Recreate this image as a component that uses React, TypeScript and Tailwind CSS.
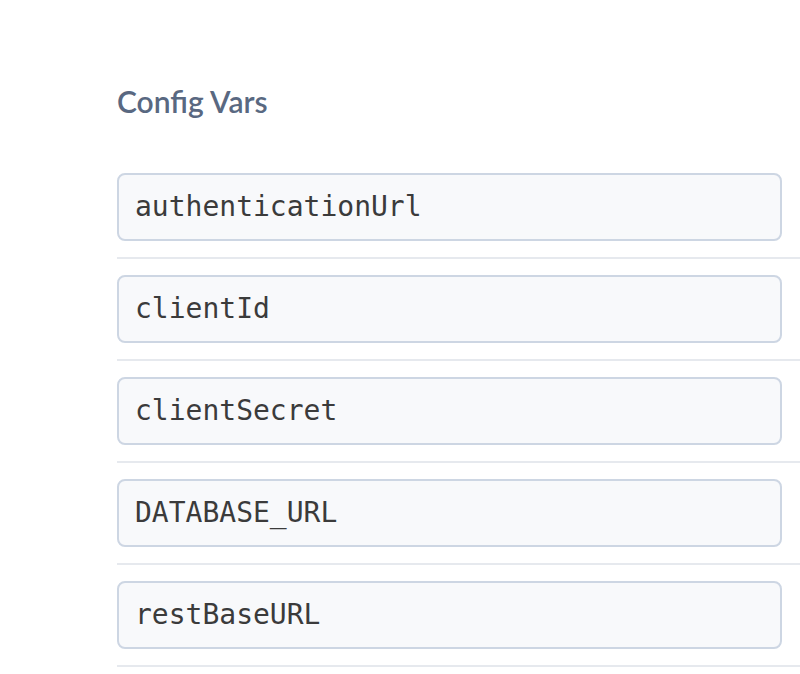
import React from "react";

const vars = ["authenticationUrl", "clientId", "clientSecret", "DATABASE_URL", "restBaseURL"];

export default function App() {
  return (
    <div className="w-[800px] h-[674px] overflow-hidden bg-white pl-[117px]">
      <h2
        className="pt-[80px] h-[157px] text-[30px] font-semibold text-[#596881] leading-[42px]"
        style={{ fontFamily: "Lato, 'Open Sans', sans-serif" }}
      >
        Config Vars
      </h2>
      <div className="flex flex-col">
        {vars.map((v) => (
          <div key={v} className="py-4 border-b-2 border-[#e6e9ee] pr-[18px]">
            <div
              className="h-[68px] rounded-[8px] border-2 border-[#cdd6e3] bg-[#f8f9fb] flex items-center pl-[16px] text-[28px] text-[#3b3b3b]"
              style={{ fontFamily: "'DejaVu Sans Mono', monospace" }}
            >
              {v}
            </div>
          </div>
        ))}
      </div>
    </div>
  );
}
